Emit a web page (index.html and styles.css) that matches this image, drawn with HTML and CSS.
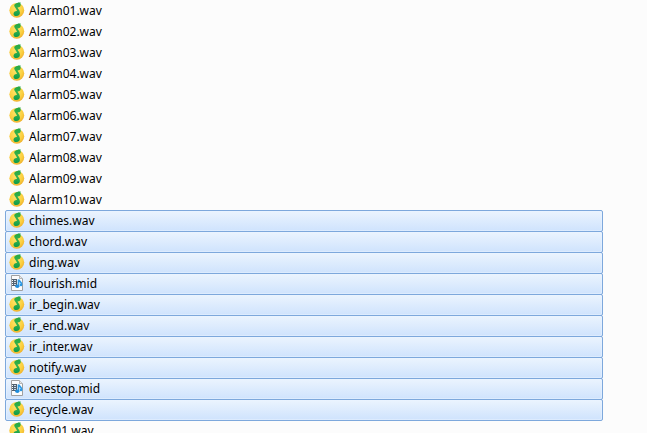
FILE: index.html
```
<!DOCTYPE html>
<html lang="en">
<head>
<meta charset="utf-8">
<title>Media</title>
<link rel="stylesheet" href="styles.css">
</head>
<body>
<svg class="sprites" aria-hidden="true">
  <defs>
    <radialGradient id="disc" cx="45%" cy="35%" r="65%">
      <stop offset="0" stop-color="#ffe56b"/>
      <stop offset=".65" stop-color="#fbd040"/>
      <stop offset="1" stop-color="#efb22f"/>
    </radialGradient>
    <linearGradient id="note" x1="0" y1="0" x2="0" y2="1">
      <stop offset="0" stop-color="#25a844"/>
      <stop offset=".5" stop-color="#35b24c"/>
      <stop offset="1" stop-color="#0c9b4b"/>
    </linearGradient>
    <symbol id="wav" viewBox="0 0 16 16">
      <circle cx="7.800" cy="8.300" r="7.400" fill="url(#disc)"/>
      <path d="M11.500.3C8.500.6 5.400 1.700 5.200 3.300 5.200 5 7.200 6.400 8.100 9 6.300 8.700 4.500 9.900 4.500 11.700c0 1.500 1.300 2.400 2.900 2.300 2.200-.1 3.700-1.500 3.500-3.600C10.700 8.600 9.400 7 8.500 5.500 10.500 5.400 11.900 4.300 11.700 2.500 11.500 1.700 11.300 1 11.500.3z" fill="url(#note)"/>
    </symbol>
    <symbol id="mid" viewBox="0 0 16 16">
      <path d="M2.500.5h8l3 3v12h-11z" fill="#fcfcfc" stroke="#a0a0a0"/>
      <path d="M10.500.5v3h3" fill="#e6e6e6" stroke="#b5b5b5"/>
      <path d="M3 4h5v7H3z" fill="#52616f"/>
      <path d="M5 5h2v1H5zM5 7h2v1H5zM5 9h2v1H5z" fill="#c9d9e5"/>
      <path d="M3 5h1v1H3zM3 7h1v1H3zM3 9h1v1H3z" fill="#fff"/>
      <path d="M9.500 11V4.500c.5 1.800 3.500 2 3 5.500" fill="none" stroke="#2f9be6" stroke-width="1.700"/>
      <ellipse cx="8.300" cy="11.300" rx="2.100" ry="1.700" fill="#218ddc"/>
      <ellipse cx="12" cy="10" rx="1.300" ry="1.200" fill="#2b98e3"/>
    </symbol>
  </defs>
</svg>
<ul class="files">
  <li class="file"><svg class="icon"><use href="#wav"/></svg><span>Alarm01.wav</span></li>
  <li class="file"><svg class="icon"><use href="#wav"/></svg><span>Alarm02.wav</span></li>
  <li class="file"><svg class="icon"><use href="#wav"/></svg><span>Alarm03.wav</span></li>
  <li class="file"><svg class="icon"><use href="#wav"/></svg><span>Alarm04.wav</span></li>
  <li class="file"><svg class="icon"><use href="#wav"/></svg><span>Alarm05.wav</span></li>
  <li class="file"><svg class="icon"><use href="#wav"/></svg><span>Alarm06.wav</span></li>
  <li class="file"><svg class="icon"><use href="#wav"/></svg><span>Alarm07.wav</span></li>
  <li class="file"><svg class="icon"><use href="#wav"/></svg><span>Alarm08.wav</span></li>
  <li class="file"><svg class="icon"><use href="#wav"/></svg><span>Alarm09.wav</span></li>
  <li class="file"><svg class="icon"><use href="#wav"/></svg><span>Alarm10.wav</span></li>
  <li class="file selected"><svg class="icon"><use href="#wav"/></svg><span>chimes.wav</span></li>
  <li class="file selected"><svg class="icon"><use href="#wav"/></svg><span>chord.wav</span></li>
  <li class="file selected"><svg class="icon"><use href="#wav"/></svg><span>ding.wav</span></li>
  <li class="file selected"><svg class="icon"><use href="#mid"/></svg><span>flourish.mid</span></li>
  <li class="file selected"><svg class="icon"><use href="#wav"/></svg><span>ir_begin.wav</span></li>
  <li class="file selected"><svg class="icon"><use href="#wav"/></svg><span>ir_end.wav</span></li>
  <li class="file selected"><svg class="icon"><use href="#wav"/></svg><span>ir_inter.wav</span></li>
  <li class="file selected"><svg class="icon"><use href="#wav"/></svg><span>notify.wav</span></li>
  <li class="file selected"><svg class="icon"><use href="#mid"/></svg><span>onestop.mid</span></li>
  <li class="file selected"><svg class="icon"><use href="#wav"/></svg><span>recycle.wav</span></li>
  <li class="file"><svg class="icon"><use href="#wav"/></svg><span>Ring01.wav</span></li>
</ul>
</body>
</html>
```
FILE: styles.css
```
body {
  margin: 0;
  height: 100vh;
  overflow: hidden;
  background: #fcfcfc;
  color: #000;
  font: 12px/20px "Noto Sans", "Open Sans", sans-serif;
}

.sprites {
  position: absolute;
  width: 0;
  height: 0;
}

.files {
  margin: 0 44px 0 5px;
  padding: 0;
  list-style: none;
}

.file {
  display: flex;
  align-items: center;
  gap: 4px;
  margin-bottom: -1px;
  padding-left: 3px;
  border: 1px solid transparent;
  border-radius: 2px;
}

.selected {
  border-color: #7da8dc;
  background: linear-gradient(#ebf4fe, #cfe3fd);
  box-shadow: inset 0 0 0 1px #e9f3ff80;
}

.icon {
  flex: none;
  width: 16px;
  height: 16px;
  margin-bottom: 2px;
}
```
